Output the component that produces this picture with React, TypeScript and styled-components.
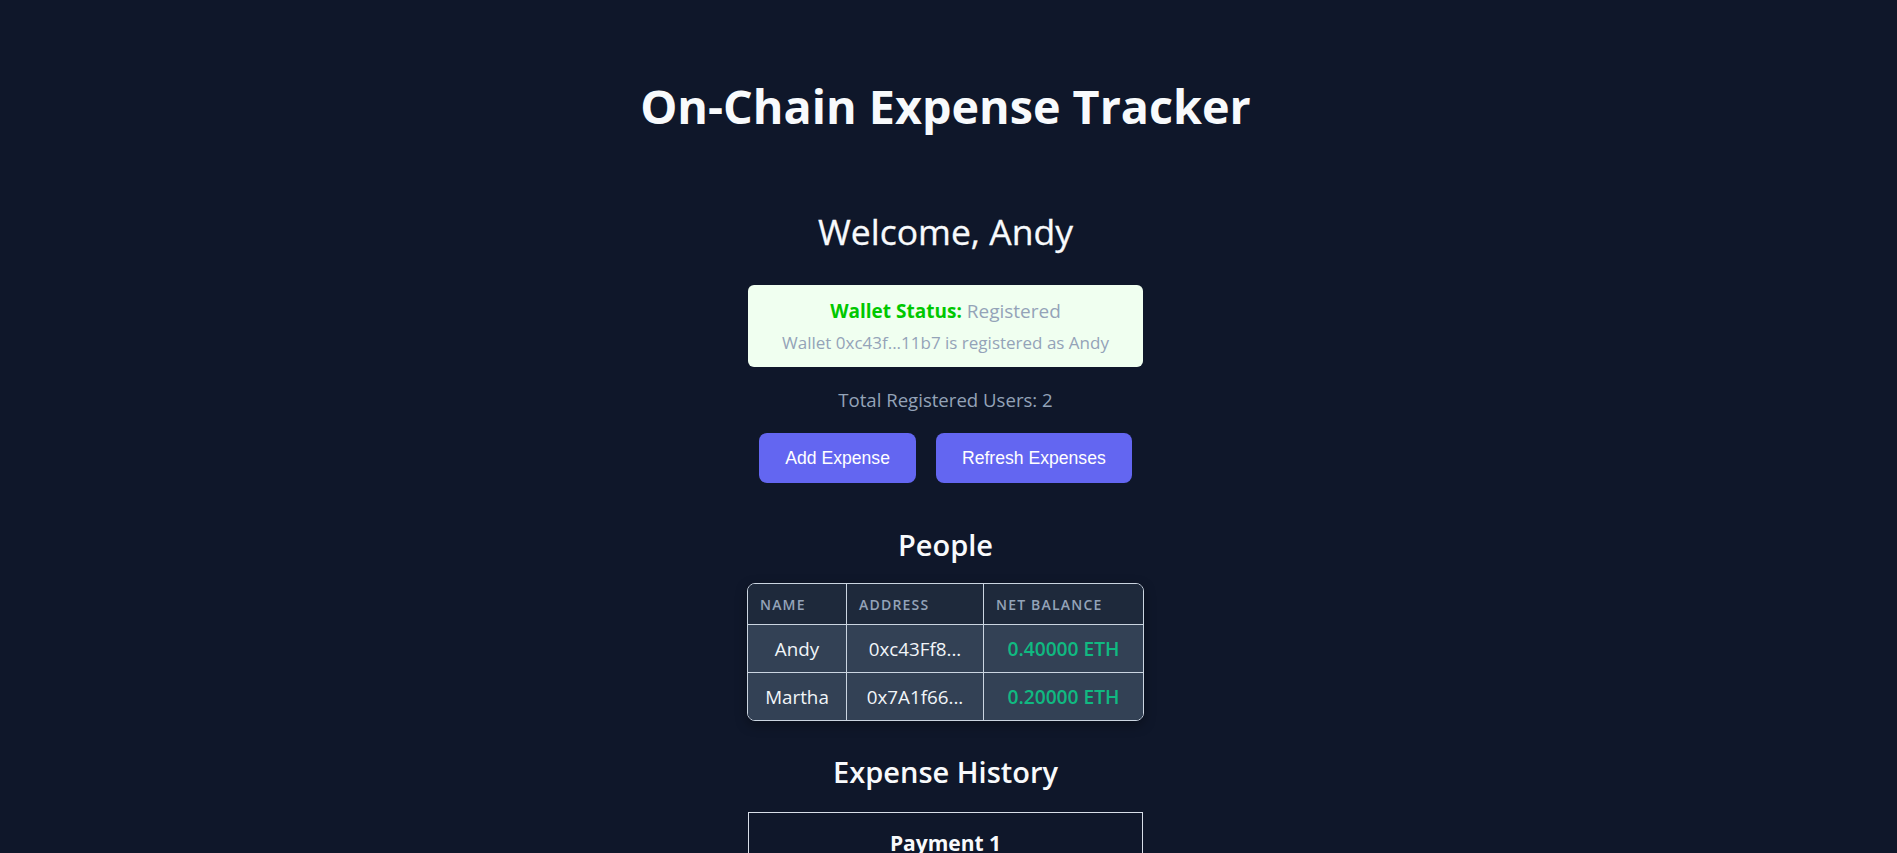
import styled, { createGlobalStyle } from "styled-components";

const GlobalStyle = createGlobalStyle`
  html, body {
    margin: 0;
    padding: 0;
    background: #0f172a;
  }
  body {
    font-family: "Open Sans", "Noto Sans", sans-serif;
    color: #f8fafc;
  }
`;

const Page = styled.main`
  display: flex;
  flex-direction: column;
  align-items: center;
  padding: 80px 6px 0 0;
`;

const Title = styled.h1`
  margin: 0 0 77px;
  font-size: 46.7px;
  line-height: 53px;
  font-weight: 700;
  color: #f8fafc;
  white-space: nowrap;
`;

const Welcome = styled.h2`
  margin: 0 0 32px;
  font-size: 35.5px;
  line-height: 43px;
  font-weight: 500;
  color: #f8fafc;
  -webkit-text-stroke: 0.3px #f8fafc;
`;

const Column = styled.section`
  width: 395px;
  display: flex;
  flex-direction: column;
  align-items: center;
`;

const StatusCard = styled.div`
  box-sizing: border-box;
  width: 100%;
  height: 82px;
  padding: 12px 16px;
  border-radius: 6px;
  background: #f0fff0;
  text-align: center;
`;

const StatusLine = styled.p`
  margin: 0 0 5px;
  font-size: 19px;
  line-height: 28px;
  color: #94a3b8;
`;

const StatusLabel = styled.strong`
  color: #00c800;
  font-weight: 700;
`;

const StatusNote = styled.p`
  margin: 0;
  font-size: 17px;
  line-height: 25px;
  color: #94a3b8;
`;

const UserCount = styled.p`
  margin: 19px 0 19px;
  font-size: 18.6px;
  line-height: 28px;
  color: #94a3b8;
`;

const Actions = styled.div`
  display: flex;
  gap: 20px;
  margin-bottom: 44px;
`;

const Button = styled.button`
  height: 50px;
  padding: 0 25px;
  border: 1px solid transparent;
  border-radius: 8px;
  background: #6366f1;
  color: #ffffff;
  font-family: "Liberation Sans", Arial, sans-serif;
  font-size: 17.6px;
  cursor: pointer;
`;

const SectionTitle = styled.h2<{ $gap: number }>`
  margin: 0 0 ${(p) => p.$gap}px;
  font-size: 29px;
  line-height: 35px;
  font-weight: 600;
  color: #f8fafc;
`;

const Table = styled.table`
  width: 395px;
  table-layout: fixed;
  border-collapse: separate;
  border-spacing: 0;
  border: 1px solid #cbd5e1;
  border-radius: 8px;
  overflow: hidden;
  margin-bottom: 33px;
  box-shadow: 0 4px 12px rgba(0, 0, 0, 0.35);
`;

const HeadCell = styled.th`
  height: 40px;
  padding: 0 12px;
  background: #1e293b;
  color: #94a3b8;
  font-size: 14px;
  font-weight: 600;
  letter-spacing: 1.2px;
  text-transform: uppercase;
  text-align: left;
  border-right: 1px solid #cbd5e1;
  &:last-child {
    border-right: none;
  }
`;

const Cell = styled.td<{ $balance?: boolean }>`
  height: 47px;
  padding: 0 8px;
  background: #334155;
  color: ${(p) => (p.$balance ? "#10b981" : "#f1f5f9")};
  font-size: ${(p) => (p.$balance ? "19.2px" : "18.8px")};
  font-weight: ${(p) => (p.$balance ? 600 : 400)};
  text-align: center;
  white-space: nowrap;
  border-top: 1px solid #cbd5e1;
  border-right: 1px solid #cbd5e1;
  &:last-child {
    border-right: none;
  }
`;

const ExpenseCard = styled.article`
  box-sizing: border-box;
  width: 395px;
  padding: 15px 16px 20px;
  border: 1px solid #d8dee8;
  text-align: center;
`;

const ExpenseName = styled.h3`
  margin: 0 0 8px;
  font-size: 21px;
  line-height: 31px;
  font-weight: 700;
  color: #f8fafc;
`;

const ExpenseLine = styled.p`
  margin: 0 0 6px;
  font-size: 16px;
  line-height: 24px;
  color: #94a3b8;
`;

const people = [
  { name: "Andy", address: "0xc43Ff8a2d91b4e3c7f0a5b6e8d2c1f9a4e3b11b7", balance: 0.4 },
  { name: "Martha", address: "0x7A1f66c0e4b2d8a9f3c5e7b1d0a2f4c6e8b9d3a5", balance: 0.2 },
];

const shorten = (addr: string) => `${addr.slice(0, 8)}...`;

export default function App() {
  return (
    <>
      <GlobalStyle />
      <Page>
        <Title>On-Chain Expense Tracker</Title>
        <Welcome>Welcome, Andy</Welcome>
        <Column>
          <StatusCard>
            <StatusLine>
              <StatusLabel>Wallet Status:</StatusLabel> Registered
            </StatusLine>
            <StatusNote>Wallet 0xc43f...11b7 is registered as Andy</StatusNote>
          </StatusCard>
          <UserCount>Total Registered Users: 2</UserCount>
          <Actions>
            <Button>Add Expense</Button>
            <Button>Refresh Expenses</Button>
          </Actions>

          <SectionTitle $gap={21}>People</SectionTitle>
          <Table>
            <colgroup>
              <col style={{ width: 99 }} />
              <col style={{ width: 137 }} />
              <col style={{ width: 159 }} />
            </colgroup>
            <thead>
              <tr>
                <HeadCell>Name</HeadCell>
                <HeadCell>Address</HeadCell>
                <HeadCell>Net Balance</HeadCell>
              </tr>
            </thead>
            <tbody>
              {people.map((person) => (
                <tr key={person.address}>
                  <Cell>{person.name}</Cell>
                  <Cell>{shorten(person.address)}</Cell>
                  <Cell $balance>{person.balance.toFixed(5)} ETH</Cell>
                </tr>
              ))}
            </tbody>
          </Table>

          <SectionTitle $gap={23}>Expense History</SectionTitle>
          <ExpenseCard>
            <ExpenseName>Payment 1</ExpenseName>
            <ExpenseLine>Amount: 0.60000 ETH</ExpenseLine>
            <ExpenseLine>Paid by: Andy</ExpenseLine>
            <ExpenseLine>Split with: Andy, Martha</ExpenseLine>
          </ExpenseCard>
        </Column>
      </Page>
    </>
  );
}
